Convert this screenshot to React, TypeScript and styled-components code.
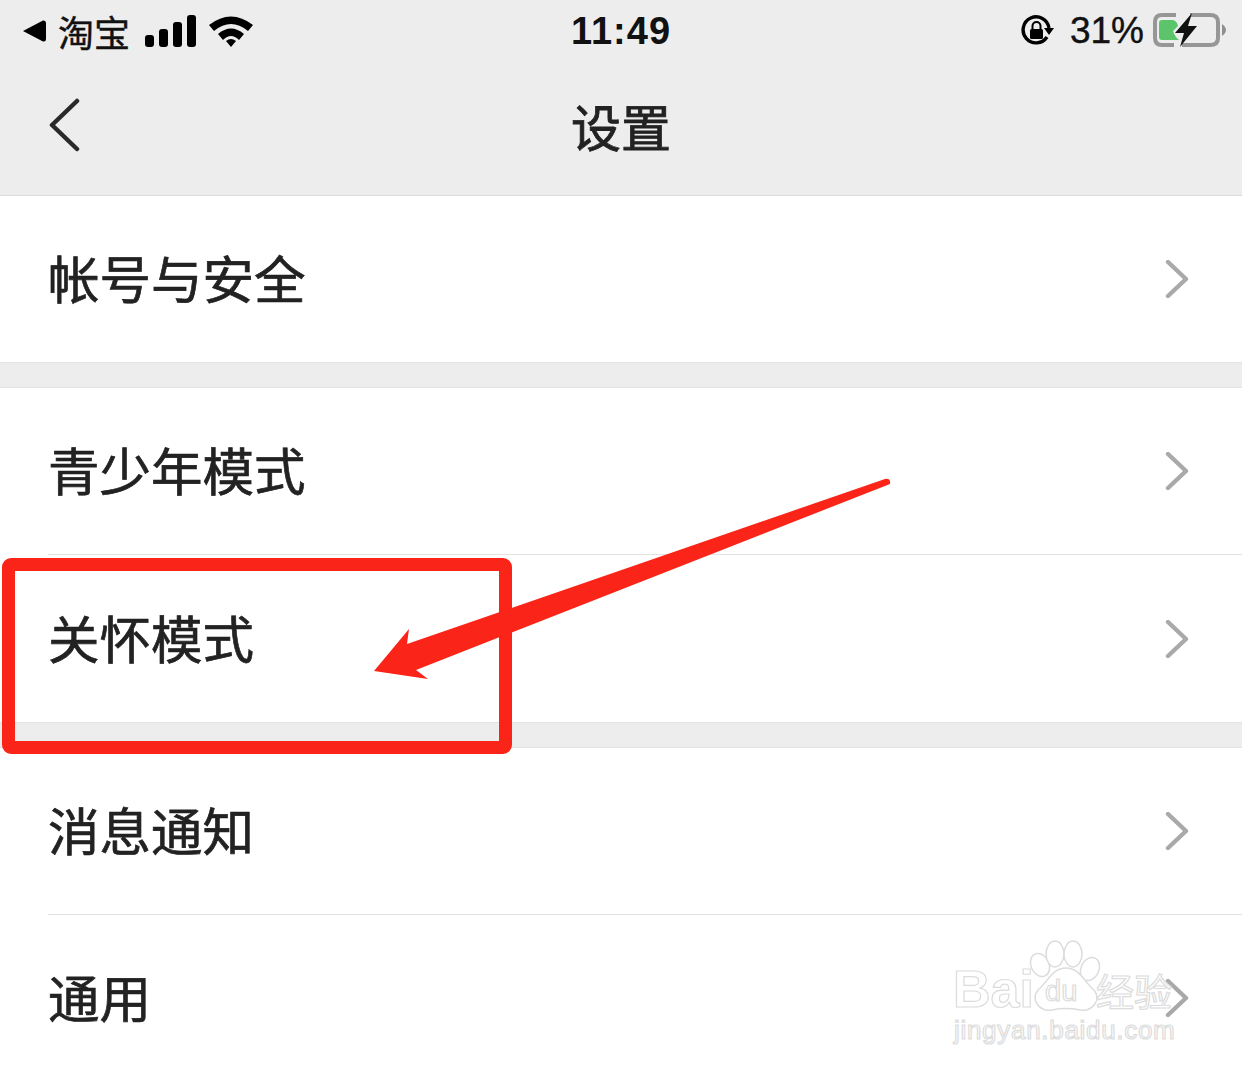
import React from 'react';
import styled, { createGlobalStyle } from 'styled-components';

const GlobalStyle = createGlobalStyle`
  html, body {
    margin: 0;
    padding: 0;
    background: #fff;
  }
`;

const cjk = `"Noto Sans CJK SC", "Noto Sans", sans-serif`;

const Page = styled.div`
  position: relative;
  width: 1242px;
  height: 1074px;
  overflow: hidden;
  background: #fff;
  font-family: ${cjk};
  color: #222;
`;

const Header = styled.header`
  background: #ededed;
  border-bottom: 1px solid #dcdcdc;
  height: 195px;
  box-sizing: content-box;
`;

const StatusBar = styled.div`
  height: 62px;
  display: grid;
  grid-template-columns: 1fr auto 1fr;
  align-items: center;
  padding: 0 22px;
  color: #000;
`;

const StatusLeft = styled.div`
  display: flex;
  align-items: center;
`;

const StatusRight = styled.div`
  display: flex;
  align-items: center;
  justify-content: flex-end;
  margin-right: -6px;
`;

const Carrier = styled.span`
  font-size: 36px;
  line-height: 62px;
  margin: 0 15px 0 12px;
  color: #111;
  -webkit-text-stroke: 0.4px #111;
`;

const Clock = styled.span`
  font-family: "Liberation Sans", Arial, sans-serif;
  font-weight: 700;
  font-size: 38px;
  letter-spacing: 1px;
  color: #111;
`;

const Battery = styled.span`
  font-family: "Liberation Sans", Arial, sans-serif;
  font-size: 37px;
  color: #111;
  margin: 0 8px 0 16px;
  -webkit-text-stroke: 0.4px #111;
`;

const NavBar = styled.div`
  height: 133px;
  display: grid;
  grid-template-columns: 1fr auto 1fr;
  align-items: center;
  padding: 0 48px 8px;
  box-sizing: border-box;
`;

const BackIcon = styled.svg`
  width: 32px;
  height: 54px;
  display: block;
`;

const Title = styled.h1`
  margin: 0;
  font-size: 50px;
  font-weight: 400;
  line-height: 60px;
  color: #222;
  -webkit-text-stroke: 0.8px #222;
`;

const Group = styled.section`
  background: #fff;
`;

const Gap = styled.div`
  height: 24px;
  background: #ededed;
  border-top: 1px solid #e2e2e2;
  border-bottom: 1px solid #e2e2e2;
`;

const Row = styled.div<{ $divider?: boolean; $height?: number }>`
  height: ${({ $height }) => $height ?? 166}px;
  margin-left: 48px;
  display: flex;
  align-items: center;
  justify-content: space-between;
  padding-right: 53px;
  border-bottom: ${({ $divider }) => ($divider ? '1px solid #e2e2e2' : 'none')};
`;

const Label = styled.span`
  font-size: 51.5px;
  line-height: 60px;
  margin-bottom: 4px;
  color: #222;
  -webkit-text-stroke: 0.7px #222;
`;

const ChevronIcon = styled.svg`
  width: 24px;
  height: 38px;
  display: block;
  flex-shrink: 0;
`;

const RedBox = styled.div`
  position: absolute;
  left: 2px;
  top: 558px;
  width: 510px;
  height: 196px;
  box-sizing: border-box;
  border: 13px solid #fb2418;
  border-radius: 9px;
`;

const Arrow = styled.svg`
  position: absolute;
  left: 360px;
  top: 470px;
  width: 540px;
  height: 220px;
`;

const Watermark = styled.div`
  position: absolute;
  left: 950px;
  top: 938px;
  width: 240px;
  height: 112px;
  color: #fff;
  font-family: "Liberation Sans", Arial, sans-serif;
  -webkit-text-stroke: 1.2px #dcdcdc;
`;

const WatermarkBrand = styled.span`
  position: absolute;
  left: 3px;
  top: 24px;
  font-size: 52px;
  font-weight: 700;
  line-height: 54px;
`;

const WatermarkDu = styled.span`
  position: absolute;
  left: 95px;
  top: 38px;
  font-size: 29px;
  line-height: 30px;
`;

const WatermarkCn = styled.span`
  position: absolute;
  left: 146px;
  top: 29px;
  font-family: ${cjk};
  font-size: 38px;
  line-height: 46px;
  white-space: nowrap;
`;

const WatermarkUrl = styled.span`
  position: absolute;
  left: 4px;
  top: 77px;
  font-size: 26px;
  line-height: 30px;
  white-space: nowrap;
  letter-spacing: 0.7px;
`;

const PawIcon = styled.svg`
  position: absolute;
  left: 72px;
  top: 0;
  width: 86px;
  height: 78px;
`;

const Chevron = () => (
  <ChevronIcon viewBox="0 0 24 38">
    <path d="M3 2 L21 19 L3 36" fill="none" stroke="#a9a9a9" strokeWidth="4.4" strokeLinecap="round" strokeLinejoin="round" />
  </ChevronIcon>
);

const Item = ({ label, divider, height }: { label: string; divider?: boolean; height?: number }) => (
  <Row $divider={divider} $height={height}>
    <Label>{label}</Label>
    <Chevron />
  </Row>
);

export default function App() {
  return (
    <Page>
      <GlobalStyle />
      <Header>
        <StatusBar>
          <StatusLeft>
            <svg width="24" height="24" viewBox="0 0 24 24">
              <path d="M1 12 L21 1.5 Q24 1 24 4 L24 20 Q24 23 21 22.5 Z" fill="#000" />
            </svg>
            <Carrier>淘宝</Carrier>
            <svg width="52" height="34" viewBox="0 0 52 34">
              <rect x="0" y="21" width="9" height="12" rx="3" fill="#000" />
              <rect x="14" y="15" width="9" height="18" rx="3" fill="#000" />
              <rect x="28" y="8" width="9" height="25" rx="3" fill="#000" />
              <rect x="42" y="1" width="9" height="32" rx="3" fill="#000" />
            </svg>
            <svg width="46" height="34" viewBox="0 0 46 34" style={{ marginLeft: 11 }}>
              <path d="M1 11 Q23 -6 45 11 L40 17 Q23 3 6 17 Z" fill="#000" />
              <path d="M10 20 Q23 9 36 20 L31 26 Q23 18 15 26 Z" fill="#000" />
              <path d="M18 27 Q23 23 28 27 L23 33 Z" fill="#000" />
            </svg>
          </StatusLeft>
          <Clock>11:49</Clock>
          <StatusRight>
            <svg width="34" height="34" viewBox="0 0 34 34">
              <path d="M27 23 A13 13 0 1 1 29 14" fill="none" stroke="#000" strokeWidth="3.4" />
              <path d="M24 14 L34 14 L29 21 Z" fill="#000" />
              <rect x="10" y="15" width="13" height="10" rx="1.5" fill="#000" />
              <path d="M12.5 15 V12 A4 4 0 0 1 20.5 12 V15" fill="none" stroke="#000" strokeWidth="2" />
            </svg>
            <Battery>31%</Battery>
            <svg width="74" height="36" viewBox="0 0 74 36">
              <path d="M24 2 H10 Q3 2 3 9 V25 Q3 32 10 32 H22 M38 2 H58 Q66 2 66 9 V25 Q66 32 58 32 H30" fill="none" stroke="#969696" strokeWidth="4" />
              <path d="M70 11 Q74 14 74 17 Q74 20 70 23 Z" fill="#8e8e8e" />
              <path d="M10 7 H21 Q25 8 26 13 L21 18 Q23 24 27 27 H10 Q7 27 7 24 V10 Q7 7 10 7 Z" fill="#5cc46a" />
              <path d="M40 0 L23 20 H32 L28 34 L45 13 H36 Z" fill="#111" />
            </svg>
          </StatusRight>
        </StatusBar>
        <NavBar>
          <BackIcon viewBox="0 0 32 54">
            <path d="M29 3 L4 27 L29 51" fill="none" stroke="#2a2a2a" strokeWidth="4.5" strokeLinecap="round" strokeLinejoin="round" />
          </BackIcon>
          <Title>设置</Title>
        </NavBar>
      </Header>

      <Group>
        <Item label="帐号与安全" />
      </Group>
      <Gap />
      <Group>
        <Item label="青少年模式" divider />
        <Item label="关怀模式" height={167} />
      </Group>
      <Gap />
      <Group>
        <Item label="消息通知" divider />
        <Item label="通用" />
      </Group>

      <Watermark>
        <PawIcon viewBox="0 0 86 78">
          <g fill="#fff" stroke="#dcdcdc" strokeWidth="1.5">
            <ellipse cx="18" cy="27" rx="9" ry="12" transform="rotate(-25 18 27)" />
            <ellipse cx="33" cy="16" rx="9" ry="13" />
            <ellipse cx="51" cy="16" rx="9" ry="13" />
            <ellipse cx="68" cy="31" rx="9" ry="12" transform="rotate(25 68 31)" />
            <path d="M44 30 C58 30 62 44 72 52 C80 62 70 74 58 72 C48 70 40 70 30 72 C18 74 8 62 16 52 C26 44 30 30 44 30 Z" />
          </g>
        </PawIcon>
        <WatermarkBrand>Bai</WatermarkBrand>
        <WatermarkDu>du</WatermarkDu>
        <WatermarkCn>经验</WatermarkCn>
        <WatermarkUrl>jingyan.baidu.com</WatermarkUrl>
      </Watermark>

      <RedBox />
      <Arrow viewBox="360 470 540 220">
        <path
          d="M374 671 L409 629 L407 644 L885 479 Q891 478 890 484 L416 670 L428 679 Z"
          fill="#fb2418"
        />
      </Arrow>
    </Page>
  );
}
